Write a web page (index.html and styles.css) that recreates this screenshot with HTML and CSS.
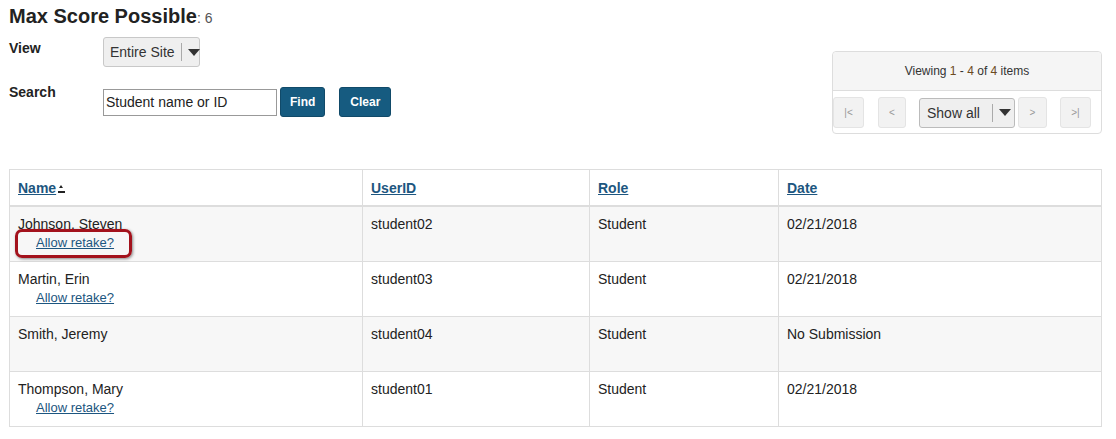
FILE: index.html
```html
<!DOCTYPE html>
<html lang="en">

<head>
  <meta charset="UTF-8">
  <title>Max Score Possible</title>
  <link rel="stylesheet" href="styles.css">
</head>

<body>
  <div class="page">
    <h1>Max Score Possible<span class="score">: 6</span></h1>

    <div class="top">
      <div class="filters">
        <label class="label">View</label>
        <div class="select view-select">
          <span class="select-text">Entire Site</span>
          <span class="select-arrow"></span>
        </div>

        <label class="label search-label">Search</label>
        <div class="search-row">
          <input class="search-input" type="text" value="Student name or ID">
          <button class="btn">Find</button>
          <button class="btn clear">Clear</button>
        </div>
      </div>

      <div class="pager">
        <div class="pager-info">Viewing <span class="num">1</span> - <span class="num">4</span> of <span class="num">4</span> items</div>
        <div class="pager-nav">
          <span class="pg first">|&lt;</span>
          <span class="pg prev">&lt;</span>
          <div class="select show-select">
            <span class="select-text">Show all</span>
            <span class="select-arrow"></span>
          </div>
          <span class="pg next">&gt;</span>
          <span class="pg last">&gt;|</span>
        </div>
      </div>
    </div>

    <table class="students">
      <thead>
        <tr>
          <th class="col-name"><a href="#">Name</a><span class="sort"></span></th>
          <th class="col-id"><a href="#">UserID</a></th>
          <th class="col-role"><a href="#">Role</a></th>
          <th><a href="#">Date</a></th>
        </tr>
      </thead>
      <tbody>
        <tr>
          <td>Johnson, Steven<br><span class="retake highlighted"><a href="#">Allow retake?</a></span></td>
          <td>student02</td>
          <td>Student</td>
          <td>02/21/2018</td>
        </tr>
        <tr>
          <td>Martin, Erin<br><span class="retake"><a href="#">Allow retake?</a></span></td>
          <td>student03</td>
          <td>Student</td>
          <td>02/21/2018</td>
        </tr>
        <tr>
          <td>Smith, Jeremy</td>
          <td>student04</td>
          <td>Student</td>
          <td>No Submission</td>
        </tr>
        <tr>
          <td>Thompson, Mary<br><span class="retake"><a href="#">Allow retake?</a></span></td>
          <td>student01</td>
          <td>Student</td>
          <td>02/21/2018</td>
        </tr>
      </tbody>
    </table>
  </div>
</body>

</html>
```

FILE: styles.css
```css
body {
  margin: 0;
  font-family: "Liberation Sans", Arial, sans-serif;
  font-size: 14px;
  color: #333;
  background: #fff;
}

.page {
  padding: 0 14px 0 9px;
}

h1 {
  margin: 0;
  padding-top: 4px;
  font-size: 20px;
  line-height: 25px;
  color: #222;
}

.score {
  font-size: 14px;
  font-weight: normal;
  color: #555;
}

/* Filters + pager */
.top {
  display: flex;
  justify-content: space-between;
  align-items: flex-start;
}

.filters {
  display: grid;
  grid-template-columns: 94px auto;
  align-items: start;
  margin-top: 6px;
}

.label {
  font-weight: bold;
  font-size: 14px;
  line-height: 16px;
  color: #222;
  padding-top: 3px;
}

.search-label {
  margin-top: 17px;
  padding-top: 0;
}

.select {
  display: flex;
  align-items: center;
  height: 28px;
  background: #efefef;
  border: 1px solid #c8c8c8;
  border-radius: 3px;
  white-space: nowrap;
}

.view-select {
  width: 95px;
}

.select-text {
  padding: 0 0 0 6px;
  font-size: 14px;
  color: #333;
}

.select-arrow {
  margin-left: 6px;
  height: 18px;
  border-left: 1px solid #aaa;
  padding-left: 6px;
  display: flex;
  align-items: center;
}

.select-arrow::after {
  content: "";
  border-left: 6px solid transparent;
  border-right: 6px solid transparent;
  border-top: 7px solid #333;
}

.search-row {
  display: flex;
  align-items: center;
  margin-top: 20px;
}

.search-input {
  width: 174px;
  height: 27px;
  box-sizing: border-box;
  margin: 0;
  border: 1px solid #999;
  padding: 0 2px;
  font-family: "Liberation Sans", Arial, sans-serif;
  font-size: 14px;
  color: #222;
}

.btn {
  margin-left: 3px;
  height: 30px;
  padding: 0 9px;
  background: #165b80;
  color: #fff;
  border: 1px solid #114a69;
  border-radius: 3px;
  font-family: "Liberation Sans", Arial, sans-serif;
  font-size: 12px;
  font-weight: bold;
}

.btn.clear {
  margin-left: 14px;
  padding: 0 10px;
}

.pager {
  width: 270px;
  margin-top: 20px;
  border: 1px solid #ddd;
  border-radius: 4px;
  box-sizing: border-box;
}

.pager-info {
  height: 38px;
  line-height: 38px;
  text-align: center;
  font-size: 12px;
  color: #333;
  background: #f5f5f5;
  border-bottom: 1px solid #ddd;
  border-radius: 4px 4px 0 0;
}

.num {
  color: #6b4a1f;
}

.pager-nav {
  display: flex;
  align-items: center;
  padding: 6px 0 5px 0;
}

.pg {
  display: flex;
  align-items: center;
  justify-content: center;
  height: 29px;
  background: #f2f2f2;
  border: 1px solid #e4e4e4;
  border-radius: 3px;
  font-size: 10px;
  color: #999;
}

.first {
  width: 29px;
}

.prev {
  width: 26px;
  margin-left: 14px;
}

.show-select {
  width: 94px;
  margin-left: 13px;
  border-color: #bbb;
}

.show-select .select-text {
  padding-left: 7px;
}

.show-select .select-arrow {
  margin-left: 12px;
}

.next {
  width: 27px;
  margin-left: 3px;
}

.last {
  width: 29px;
  margin-left: 13px;
}

/* Table */
.students {
  width: 100%;
  margin-top: 35px;
  border-collapse: collapse;
  border: 1px solid #ddd;
}

.students th,
.students td {
  border: 1px solid #ddd;
  text-align: left;
  vertical-align: top;
  padding: 0 8px;
}

.students th {
  height: 35px;
  vertical-align: middle;
  border-bottom: 2px solid #ddd;
  font-size: 14px;
}

.students th a {
  color: #1d5680;
  text-decoration: underline;
}

.col-name {
  width: 336px;
}

.col-id {
  width: 210px;
}

.col-role {
  width: 172px;
}

.sort {
  display: inline-block;
  width: 7px;
  height: 6px;
  margin-left: 2px;
  position: relative;
  top: 0;
  border-bottom: 2px solid #222;
}

.sort::before {
  content: "";
  position: absolute;
  left: 1px;
  top: 0;
  border-left: 2.5px solid transparent;
  border-right: 2.5px solid transparent;
  border-bottom: 3px solid #222;
}

.students td {
  height: 55px;
  box-sizing: border-box;
  padding-top: 8px;
  line-height: 18px;
  color: #222;
}

.students tbody tr:nth-child(odd) {
  background: #f7f7f7;
}

.retake {
  display: inline-block;
  padding-left: 18px;
  font-size: 13px;
}

.retake a {
  color: #1d5680;
}

.highlighted {
  position: relative;
}

.highlighted::after {
  content: "";
  position: absolute;
  left: -3px;
  top: -5px;
  right: -18px;
  bottom: -6px;
  border: 3px solid #a3121c;
  border-radius: 7px;
  box-shadow: 1px 1px 3px rgba(0, 0, 0, 0.45);
}
```
